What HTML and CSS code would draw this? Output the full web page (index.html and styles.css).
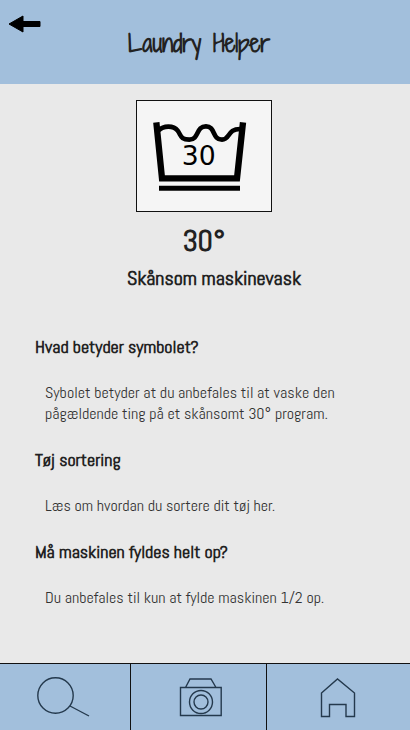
FILE: index.html
```html
<!DOCTYPE html>
<html lang="da">
<head>
<meta charset="utf-8">
<meta name="viewport" content="width=device-width, initial-scale=1">
<title>Laundry Helper</title>
<link rel="stylesheet" href="styles.css">
</head>
<body>
<header class="header">
  <a class="back" href="#" aria-label="Tilbage">
    <svg width="34" height="20" viewBox="0 0 34 20" aria-hidden="true">
      <path d="M1 10 L15 2 V7.5 H32 V12.5 H15 V18 Z" fill="#000" stroke="#000" stroke-linejoin="round"/>
    </svg>
  </a>
  <h1 class="title">Laundry Helper</h1>
</header>
<main class="content">
  <section class="hero">
    <svg class="symbol" viewBox="21 18 402 330" role="img" aria-label="30 graders skånevask">
      <path d="M79 82 L96 250 H321 L339 82" fill="none" stroke="#000" stroke-width="19"/>
      <path d="M86 106 C100 92 130 90 143 107 C154 122 151 134 178 134 C208 134 197 94 228 94 C257 94 246 134 276 134 C301 134 291 101 332 102" fill="none" stroke="#000" stroke-width="14"/>
      <path d="M87 280 H330" stroke="#000" stroke-width="15"/>
      <text class="degrees" x="206" y="211" text-anchor="middle">30</text>
    </svg>
    <h2 class="temperature">30°</h2>
    <p class="program">Skånsom maskinevask</p>
  </section>
  <section class="info">
    <h3>Hvad betyder symbolet?</h3>
    <p>Sybolet betyder at du anbefales til at vaske den<br>pågældende ting på et skånsomt 30° program.</p>
    <h3>Tøj sortering</h3>
    <p>Læs om hvordan du sortere dit tøj her.</p>
    <h3>Må maskinen fyldes helt op?</h3>
    <p>Du anbefales til kun at fylde maskinen 1/2 op.</p>
  </section>
</main>
<nav class="tabs">
  <a href="#" aria-label="Søg">
    <svg width="60" height="44" viewBox="0 0 60 44" aria-hidden="true"><circle cx="20.5" cy="20.5" r="17.7"/><path d="M35 31 L54 41"/></svg>
  </a>
  <a href="#" aria-label="Kamera">
    <svg width="46" height="40" viewBox="0 0 46 40" aria-hidden="true"><path d="M4.500 10.500 H45.200 V38.500 H4.500 Z M9.500 10.500 L14 2 H35 L40 10.500"/><circle cx="25" cy="25" r="11.500"/><circle cx="25" cy="25" r="7"/></svg>
  </a>
  <a href="#" aria-label="Hjem">
    <svg width="38" height="42" viewBox="0 0 38 42" aria-hidden="true"><path d="M1.500 17 L17.500 3 L34.500 17 V40.500 H26 V28.500 H9.500 V40.500 H1.500 Z"/></svg>
  </a>
</nav>
</body>
</html>
```
FILE: styles.css
```css
* {
  box-sizing: border-box;
}

body {
  margin: 0;
  min-height: 100vh;
  display: flex;
  flex-direction: column;
  background: #e9e9e9;
  color: #222;
  font-family: "Abel", "Liberation Sans Narrow", "Roboto Condensed", "Liberation Sans", sans-serif;
}

h1, h2, h3, p {
  margin: 0;
}

.header {
  position: relative;
  padding: 25px 12px 23px 0;
  background: #a2bfdc;
  text-align: center;
}

.back {
  position: absolute;
  top: 14px;
  left: 8px;
  line-height: 0;
}

.title {
  font-family: "Shadows Into Light Two", "Shadows Into Light", "Liberation Sans Narrow", cursive;
  font-size: 24px;
  line-height: 36px;
  font-weight: 700;
}

.content {
  flex: 1;
}

.hero {
  display: flex;
  flex-direction: column;
  align-items: center;
  padding: 16px 2px 0 0;
}

.symbol {
  width: 136px;
  height: 112px;
  border: 1px solid #111;
  background: #f5f5f5;
}

.degrees {
  font-family: "DejaVu Sans", sans-serif;
  font-size: 80px;
}

.temperature {
  margin-top: 9px;
  font-size: 30px;
  line-height: 40px;
  font-weight: 700;
}

.program {
  padding-left: 20px;
  margin-top: 4px;
  font-size: 20px;
  line-height: 26px;
  font-weight: 700;
}

.info {
  padding: 44px 35px 0;
}

.info h3 {
  font-size: 18px;
  line-height: 24px;
  font-weight: 700;
}

.info p {
  padding: 23px 10px 24px;
  font-size: 16px;
  line-height: 21px;
  color: #333;
}

.tabs {
  display: grid;
  grid-template-columns: 130fr 136fr 144fr;
  border-top: 1px solid #111;
  background: #a2bfdc;
}

.tabs a {
  display: flex;
  align-items: center;
  justify-content: center;
  height: 66px;
}

.tabs a + a {
  border-left: 1px solid #111;
}

.tabs svg {
  fill: none;
  stroke: #24394d;
  stroke-width: 1.4;
}
```
